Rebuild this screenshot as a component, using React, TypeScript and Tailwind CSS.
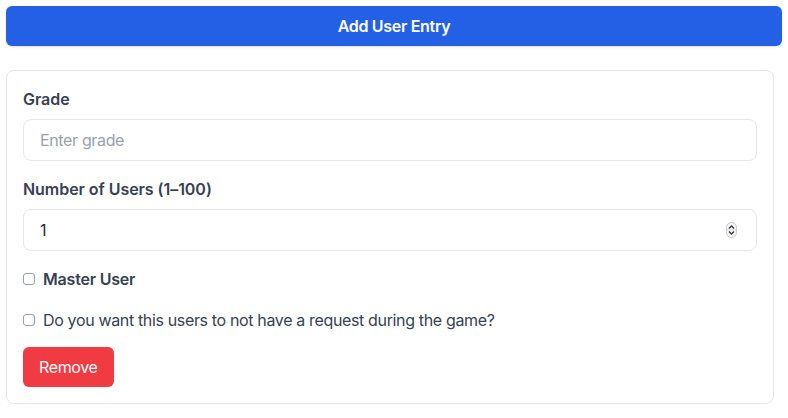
export default function App() {
  return (
    <div
      className="p-1.5 bg-white min-h-screen text-gray-700 tracking-[-0.35px]"
      style={{ fontFamily: 'Inter, "Noto Sans", sans-serif' }}
    >
      <button className="w-full h-10 rounded-md bg-[#2360e6] text-white font-semibold text-base shadow-sm tracking-[-0.3px]">
        Add User Entry
      </button>

      <div className="mt-6 mr-2 border border-gray-200 rounded-lg p-4">
        <label className="block font-semibold text-base leading-6 mb-2 tracking-[-0.05px]">Grade</label>
        <div className="h-[42px] border border-gray-200 rounded-lg px-4 flex items-center text-base text-gray-400 mb-4">
          Enter grade
        </div>

        <label className="block font-semibold text-base leading-6 mb-2 tracking-[-0.05px]">
          Number of Users (1–100)
        </label>
        <div className="h-[42px] border border-gray-200 rounded-lg pl-4 pr-[19px] flex items-center justify-between text-base text-gray-800 mb-4">
          <span>1</span>
          <svg width="11" height="16" viewBox="0 0 11 16" fill="none">
            <rect x="0.5" y="0.5" width="10" height="15" rx="5" stroke="#c8c8cc" fill="#f5f5f7" />
            <path d="M3 6.5 L5.5 4 L8 6.5" stroke="#333" strokeWidth="1.3" fill="none" />
            <path d="M3 9.5 L5.5 12 L8 9.5" stroke="#333" strokeWidth="1.3" fill="none" />
            <line x1="1" y1="8" x2="10" y2="8" stroke="#d4d4d8" strokeWidth="0.8" />
          </svg>
        </div>

        <div className="flex items-center gap-2 h-6 mb-[17px]">
          <span className="w-3 h-3 border border-gray-400 rounded-[3px] bg-white" />
          <span className="font-semibold text-base tracking-[-0.2px]">Master User</span>
        </div>

        <div className="flex items-center gap-2 h-6 mb-[15px]">
          <span className="w-3 h-3 border border-gray-400 rounded-[3px] bg-white" />
          <span className="text-base">Do you want this users to not have a request during the game?</span>
        </div>

        <button className="h-10 px-4 rounded-md bg-[#ef3b41] text-white text-base">
          Remove
        </button>
      </div>
    </div>
  );
}
